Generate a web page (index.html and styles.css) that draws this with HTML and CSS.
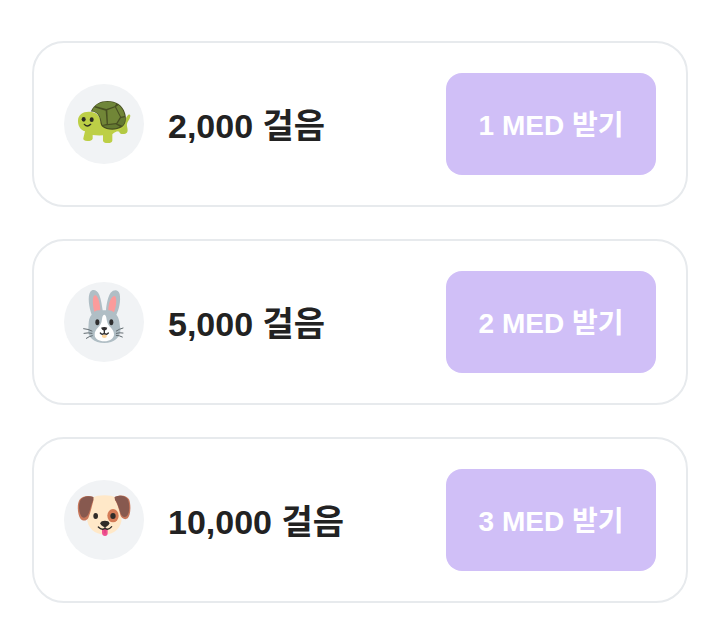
FILE: index.html
```html
<!DOCTYPE html>
<html lang="ko">
<head>
    <meta charset="UTF-8">
    <meta name="viewport" content="width=device-width, initial-scale=1">
    <title>걸음 보상</title>
    <link rel="stylesheet" href="styles.css">
</head>
<body>
    <ul class="reward-list">
        <li class="reward">
            <svg class="avatar" viewBox="24 24 240 240" aria-hidden="true">
                <!-- legs and tail -->
                <path d="M200 143C208 138 209 122 217 116C225 112 224 123 219 131C214 139 212 143 213 151C216 163 216 171 208 173C199 175 190 174 190 167L176 163Z" fill="#b3c943"/>
                <path d="M66 132C67 117 80 107 98 107C119 106 132 119 134 136C139 151 149 157 174 158L204 153L190 164Q172 169 169 175V194Q168 201 155 201Q142 201 141 194V178Q124 179 110 177V188Q108 195 94 195Q80 194 82 187L87 166C73 162 65 149 66 132Z" fill="#bdcf46"/>
                <!-- shell -->
                <path d="M104 107C115 84 133 75 155 75C179 75 201 88 207 111C213 130 209 146 197 154C181 164 151 163 139 152C131 145 135 133 128 120C123 111 115 106 104 107Z" fill="#485022"/>
                <path d="M117 90C132 76 162 73 181 83L176 91L151 99Z" fill="#6f8639"/>
                <path d="M114 94L149 104L152 144L139 147C136 139 136 129 130 119Q122 107 108 105Z" fill="#718637"/>
                <path d="M154 103L177 94L192 123L181 141L156 144Z" fill="#718637"/>
                <path d="M180 92L188 87Q202 99 206 120L195 122Z" fill="#718637"/>
                <path d="M195 126L207 124Q209 140 199 149L184 143Z" fill="#647a31"/>
                <path d="M140 149L179 145L192 152Q164 165 140 149Z" fill="#647a31"/>
                <ellipse cx="83" cy="130" rx="6" ry="7" fill="#2b2b22"/>
                <ellipse cx="107" cy="131" rx="6" ry="7" fill="#2b2b22"/>
                <path d="M85 145Q94 155 104 145" fill="none" stroke="#2f3020" stroke-width="4" stroke-linecap="round"/>
            </svg>
            <p class="steps">2,000 걸음</p>
            <button class="claim" type="button">1 MED 받기</button>
        </li>
        <li class="reward">
            <svg class="avatar" viewBox="24 24 240 240" aria-hidden="true">
                <!-- ears -->
                <path d="M107 122C99 100 94 66 103 53C110 44 124 48 130 63C135 75 138 96 140 109H150C151 91 156 67 164 56C174 44 188 47 191 60C195 81 189 106 181 122C191 134 190 147 193 163C196 190 174 207 145 207C115 207 93 190 97 165C99 147 96 135 107 122Z" fill="#b0bec5"/>
                <path d="M115 113C109 90 109 67 116 64C126 62 132 88 133 109Q122 108 115 113Z" fill="#fb9b9b"/>
                <path d="M157 109C157 86 167 65 176 66C184 69 181 98 174 115Q166 108 157 109Z" fill="#fb9b9b"/>
                <path d="M145 122C151 123 151 132 153 142C155 158 174 164 174 181C174 195 160 202 145 202C129 202 115 195 116 181C116 165 135 157 137 142C139 131 139 123 145 122Z" fill="#fff"/>
                <ellipse cx="124" cy="145" rx="6" ry="9" fill="#302f30"/>
                <ellipse cx="166" cy="145" rx="6" ry="9" fill="#302f30"/>
                <!-- teeth, nose and mouth -->
                <path d="M138 182H152V189Q145 195 138 189Z" fill="#ffd59b"/>
                <path d="M135 161Q145 157 154 161Q153 168 145 170Q137 168 135 161Z" fill="#302f30"/>
                <path d="M145 168V177M133 177Q138 184 145 178Q151 184 157 177" fill="none" stroke="#302f30" stroke-width="4" stroke-linecap="round"/>
                <path d="M83 164Q97 165 108 171M84 178Q97 175 108 178M91 193Q99 187 109 185M201 162Q190 165 181 171M201 177Q191 175 181 178M199 189Q190 184 181 184" fill="none" stroke="#626b70" stroke-width="3" stroke-linecap="round"/>
            </svg>
            <p class="steps">5,000 걸음</p>
            <button class="claim" type="button">2 MED 받기</button>
        </li>
        <li class="reward">
            <svg class="avatar" viewBox="24 24 240 240" aria-hidden="true">
                <path d="M110 76C126 68 163 67 179 76C192 86 196 112 197 138C197 166 176 188 146 188C116 188 94 167 93 139C93 112 97 87 110 76Z" fill="#ffe8c8"/>
                <!-- ears -->
                <path d="M112 75C98 69 78 71 70 84C62 99 65 130 74 141C82 149 93 146 97 138C104 122 107 104 112 86Z" fill="#c8775b"/>
                <path d="M112 75C98 70 80 73 73 85C66 99 69 124 77 134C85 141 93 135 97 127C103 113 106 97 112 84Z" fill="#87594f"/>
                <path d="M176 75C192 67 211 69 219 82C226 99 224 130 215 139C207 145 196 139 193 129C189 113 184 94 177 84Z" fill="#c8775b"/>
                <path d="M176 75C192 68 209 71 216 83C222 99 221 123 213 132C205 139 196 133 193 122C189 108 184 92 177 83Z" fill="#87594f"/>
                <ellipse cx="171" cy="131" rx="17" ry="20" fill="#d47b56"/>
                <ellipse cx="119" cy="132" rx="7" ry="9" fill="#302c29"/>
                <ellipse cx="171" cy="132" rx="8" ry="9" fill="#302c29"/>
                <!-- tongue, nose and mouth -->
                <path d="M138 172Q147 169 155 172V183Q155 192 147 192Q139 192 138 183Z" fill="#ef5090"/>
                <path d="M147 174V184" fill="none" stroke="#cf2e72" stroke-width="2"/>
                <path d="M133 154C133 144 161 144 160 154C159 160 152 165 147 165C141 165 134 160 133 154Z" fill="#302c29"/>
                <path d="M147 163V169M127 165Q137 176 147 169Q157 176 167 164" fill="none" stroke="#302c29" stroke-width="4" stroke-linecap="round"/>
            </svg>
            <p class="steps">10,000 걸음</p>
            <button class="claim" type="button">3 MED 받기</button>
        </li>
    </ul>
</body>
</html>
```

FILE: styles.css
```css
* {
    box-sizing: border-box;
}
body {
    margin: 0;
    background: #fff;
    font-family: "Liberation Sans", "Noto Sans CJK KR", sans-serif;
}
.reward-list {
    display: flex;
    flex-direction: column;
    gap: 32px;
    margin: 0;
    padding: 41px 32px 23px;
    list-style: none;
}
.reward {
    display: flex;
    align-items: center;
    gap: 24px;
    padding: 30px;
    border: 2px solid #e7eaed;
    border-radius: 32px;
}
.avatar {
    flex: none;
    width: 80px;
    height: 80px;
    border-radius: 50%;
    background: #f1f3f5;
}
.steps {
    flex: 1;
    margin: 0;
    padding-top: 4px;
    color: #222;
    font-size: 34px;
    font-weight: 600;
    line-height: 48px;
}
.claim {
    min-width: 210px;
    padding: 32px 32px 28px;
    border: none;
    border-radius: 16px;
    background: #d0bff7;
    color: #fff;
    font-family: inherit;
    font-size: 28px;
    font-weight: 600;
    line-height: 42px;
    white-space: nowrap;
    cursor: pointer;
}
```
